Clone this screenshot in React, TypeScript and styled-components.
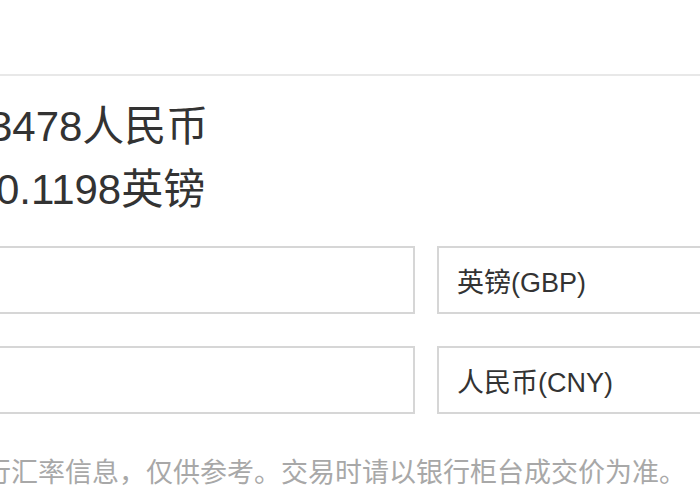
import { Fragment } from "react";
import styled, { createGlobalStyle } from "styled-components";

const GlobalStyle = createGlobalStyle`
    body {
        margin: 0;
        background: #ffffff;
        overflow: hidden;
        font-family: "Liberation Sans", "Noto Sans CJK SC", sans-serif;
    }
`;

const Page = styled.div`
    width: 1000px;
`;

const Header = styled.div`
    height: 74px;
    border-bottom: 2px solid #e8e8e8;
`;

const Body = styled.div`
    margin-left: -178px;
    padding-top: 19px;
`;

const RateLine = styled.div`
    font-size: 42px;
    line-height: 63px;
    color: #333333;
    white-space: nowrap;
`;

const FormGrid = styled.div`
    display: grid;
    grid-template-columns: 593px 300px;
    column-gap: 22px;
    row-gap: 32px;
    margin-top: 25px;
`;

const AmountInput = styled.input`
    box-sizing: border-box;
    height: 68px;
    border: 2px solid #d6d6d6;
    padding: 0 18px;
    font-size: 27px;
    font-family: inherit;
    color: #333333;
    outline: none;
`;

const CurrencySelect = styled.div`
    box-sizing: border-box;
    height: 68px;
    border: 2px solid #d6d6d6;
    padding: 0 18px;
    display: flex;
    align-items: center;
    font-size: 27px;
    color: #333333;
    white-space: nowrap;
`;

const Note = styled.div`
    margin-top: 39px;
    font-size: 27px;
    line-height: 40px;
    color: #a8a8a8;
    white-space: nowrap;
`;

const pairs = [
    { code: "英镑(GBP)" },
    { code: "人民币(CNY)" },
];

export default function App() {
    return (
        <Page>
            <GlobalStyle />
            <Header />
            <Body>
                <RateLine>1英镑=8.3478人民币</RateLine>
                <RateLine>1人民币=0.1198英镑</RateLine>
                <FormGrid>
                    {pairs.map((p) => (
                        <Fragment key={p.code}>
                            <AmountInput />
                            <CurrencySelect>{p.code}</CurrencySelect>
                        </Fragment>
                    ))}
                </FormGrid>
                <Note>以上为中国银行汇率信息，仅供参考。交易时请以银行柜台成交价为准。</Note>
            </Body>
        </Page>
    );
}
